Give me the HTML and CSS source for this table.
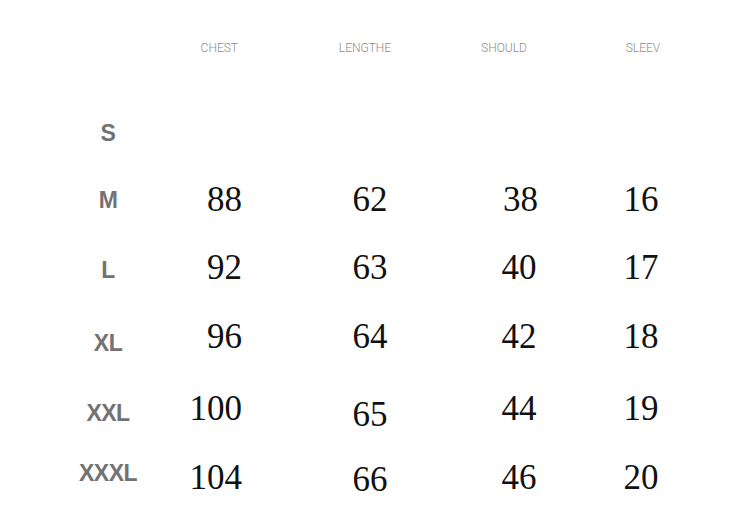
FILE: index.html
```html
<!DOCTYPE html>
<html>
<head>
<meta charset="utf-8">
<link rel="stylesheet" href="styles.css">
</head>
<body>
<div class="chart">
  <div class="cell"></div>
  <div class="cell head h1">CHEST</div>
  <div class="cell head h2">LENGTHE</div>
  <div class="cell head h3">SHOULD</div>
  <div class="cell head h4">SLEEV</div>

  <div class="cell size">S</div>
  <div class="cell num c1"></div>
  <div class="cell num"></div>
  <div class="cell num"></div>
  <div class="cell num"></div>

  <div class="cell size d1">M</div>
  <div class="cell num c1 r1">88</div>
  <div class="cell num">62</div>
  <div class="cell num r1">38</div>
  <div class="cell num">16</div>

  <div class="cell size d3">L</div>
  <div class="cell num c1">92</div>
  <div class="cell num">63</div>
  <div class="cell num">40</div>
  <div class="cell num">17</div>

  <div class="cell size d7">XL</div>
  <div class="cell num c1">96</div>
  <div class="cell num">64</div>
  <div class="cell num">42</div>
  <div class="cell num">18</div>

  <div class="cell size d5">XXL</div>
  <div class="cell num c1">100</div>
  <div class="cell num d6">65</div>
  <div class="cell num">44</div>
  <div class="cell num">19</div>

  <div class="cell size u4">XXXL</div>
  <div class="cell num c1">104</div>
  <div class="cell num d2">66</div>
  <div class="cell num">46</div>
  <div class="cell num">20</div>
</div>
</body>
</html>
```
FILE: styles.css
```css
html, body {
  margin: 0;
  padding: 0;
  background: #ffffff;
}
.chart {
  display: grid;
  padding-left: 50px;
  grid-template-columns: 116px 114px 180px 118px 126px;
  grid-template-rows: 95px 76px 56px 80px 58px 86px 52px;
  align-items: center;
}
.cell {
  text-align: center;
  line-height: 1;
}
.head {
  font-family: Roboto, "Liberation Sans", sans-serif;
  font-weight: 300;
  font-size: 12px;
  color: #8c8c8c;
}
.h1 { text-align: right; padding-right: 42px; }
.h2 { padding-right: 10px; }
.h3 { padding-right: 30px; }
.h4 { padding-left: 4px; }
.size {
  font-family: "Liberation Sans", Arial, sans-serif;
  font-weight: bold;
  font-size: 23px;
  letter-spacing: -0.5px;
  color: #727272;
}
.num {
  font-family: "Liberation Serif", "Times New Roman", serif;
  font-size: 35px;
  color: #111111;
}
.c1 { text-align: right; padding-right: 38px; }
.r1 { padding-left: 3px; }
.d1 { margin-top: 2px; }
.d2 { margin-top: 4px; }
.d3 { margin-top: 6px; }
.d5 { margin-top: 10px; }
.d6 { margin-top: 12px; }
.d7 { margin-top: 14px; }
.u4 { margin-bottom: 8px; }
```
